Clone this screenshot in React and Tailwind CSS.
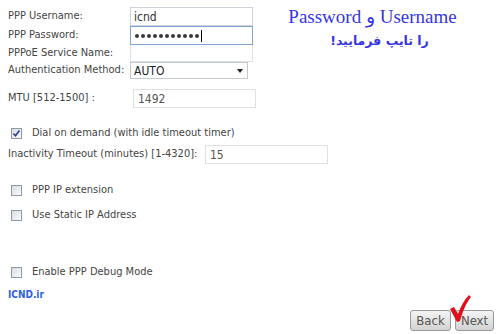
const FONT = "font-['DejaVu_Sans_Condensed','Liberation_Sans',sans-serif]"

function Box({ checked }) {
  return (
    <span className="w-[11px] h-[11px] border border-[#8c99a6] bg-gradient-to-br from-[#dcdcdc] to-[#fbfbfb] flex items-center justify-center shrink-0">
      {checked && (
        <svg width="9" height="9" viewBox="0 0 9 9">
          <path d="M1.5 4.5 L3.5 6.8 L7.5 1.5" stroke="#2a3c8c" strokeWidth="1.6" fill="none" />
        </svg>
      )}
    </span>
  )
}

function CheckRow({ label, checked, className }) {
  return (
    <div className={`flex items-center h-[14px] pl-[11px] ${className}`}>
      <Box checked={checked} />
      <span className="ml-[10px]">{label}</span>
    </div>
  )
}

const DOTS = Array.from({ length: 11 })

export default function App() {
  return (
    <div className={`relative w-[500px] h-[334px] bg-white text-[#444] text-[11px] overflow-hidden ${FONT}`}>
      {/* PPP fields */}
      <div className="pt-[7px]">
        <div className="flex items-center h-[19px]">
          <span className="w-[130px] pl-[8px]">PPP Username:</span>
          <div className="w-[123px] h-[19px] border border-[#cdd3da] flex items-center px-[3px] text-[12px] text-[#333]">icnd</div>
        </div>
        <div className="flex items-center h-[19px]">
          <span className="w-[130px] pl-[8px]">PPP Password:</span>
          <div className="w-[123px] h-[19px] border border-[#7fa4cf] flex items-center pl-[4px]">
            <div className="flex gap-[2px]">
              {DOTS.map((_, i) => (
                <span key={i} className="w-[4px] h-[4px] rounded-full bg-[#3a3a3a]" />
              ))}
            </div>
            <span className="w-px h-[12px] bg-black ml-[2px]" />
          </div>
        </div>
        <div className="flex items-center h-[17px]">
          <span className="w-[130px] pl-[8px]">PPPoE Service Name:</span>
          <div className="w-[123px] h-[17px] border border-t-0 border-[#dde1e5]" />
        </div>
        <div className="flex items-center h-[17px]">
          <span className="w-[130px] pl-[8px]">Authentication Method:</span>
          <div className="w-[118px] h-[17px] border border-[#c4c9ce] flex items-center justify-between pl-[3px] pr-[4px] text-[12px] text-[#222]">
            <span>AUTO</span>
            <span className="w-0 h-0 border-l-[3px] border-r-[3px] border-t-[4px] border-l-transparent border-r-transparent border-t-[#222]" />
          </div>
        </div>
      </div>

      <div className="flex items-center h-[19px] mt-[10px]">
        <span className="w-[133px] pl-[8px]">MTU [512-1500] :</span>
        <div className="w-[123px] h-[19px] border border-[#e0e0e0] flex items-center px-[4px] text-[12px] text-[#555]">1492</div>
      </div>

      <CheckRow className="mt-[18px]" checked label="Dial on demand (with idle timeout timer)" />

      <div className="flex items-center h-[19px] mt-[5px]">
        <span className="w-[205px] pl-[8px]">Inactivity Timeout (minutes) [1-4320]:</span>
        <div className="w-[123px] h-[19px] border border-[#e0e0e0] flex items-center px-[4px] text-[12px] text-[#555]">15</div>
      </div>

      <CheckRow className="mt-[19px]" label="PPP IP extension" />
      <CheckRow className="mt-[11px]" label="Use Static IP Address" />
      <CheckRow className="mt-[43px]" label="Enable PPP Debug Mode" />

      <div className="mt-[8px] pl-[8px] h-[13px] text-[10px] font-bold text-[#2f5fe0]">ICND.ir</div>

      <div className="flex justify-end gap-[4px] pr-[6px] mt-[10px]">
        <button className="w-[41px] h-[21px] rounded-[3px] border border-[#9a9a9a] bg-gradient-to-b from-[#f4f4f4] to-[#d2d2d2] text-[13px] text-[#555]">Back</button>
        <button className="w-[39px] h-[21px] rounded-[3px] border border-[#9a9a9a] bg-gradient-to-b from-[#f4f4f4] to-[#d2d2d2] text-[13px] text-[#555]">Next</button>
      </div>

      {/* note overlay */}
      <div className="absolute left-[250px] top-[5px] w-[245px] flex flex-col items-center text-[#3535e6]">
        <div dir="rtl" className="font-['Liberation_Serif','DejaVu_Serif',serif] text-[19px] leading-[24px]">Username و Password</div>
        <div dir="rtl" className="font-['DejaVu_Sans',sans-serif] font-bold text-[12.5px] leading-[20px] mt-[2px] pl-[14px]">را تایپ فرمایید!</div>
      </div>

      {/* red tick */}
      <svg className="absolute left-[449px] top-[294px]" width="24" height="30" viewBox="0 0 24 30">
        <path d="M1 15 L5 13 L9 20 C12 12 15 6 20 1 L22 3 C17 9 14 17 11 27 L8 28 Z" fill="#e0101a" />
      </svg>
    </div>
  )
}
